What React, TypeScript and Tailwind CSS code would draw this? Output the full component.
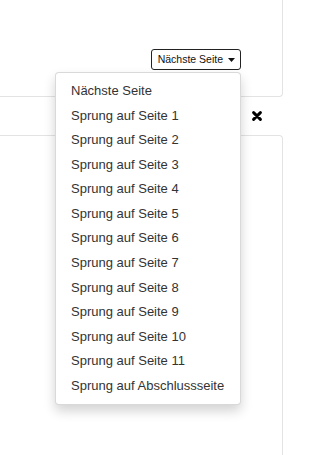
import React from "react";

const items = [
  "Nächste Seite",
  "Sprung auf Seite 1",
  "Sprung auf Seite 2",
  "Sprung auf Seite 3",
  "Sprung auf Seite 4",
  "Sprung auf Seite 5",
  "Sprung auf Seite 6",
  "Sprung auf Seite 7",
  "Sprung auf Seite 8",
  "Sprung auf Seite 9",
  "Sprung auf Seite 10",
  "Sprung auf Seite 11",
  "Sprung auf Abschlussseite",
];

export default function App() {
  return (
    <div className="w-[307px] h-[455px] overflow-hidden bg-white relative font-['Liberation_Sans',Arial,sans-serif] text-[#333]">
      <div className="-ml-[10px] w-[293px] flex flex-col">
        <div className="h-[97px] border border-t-0 border-[#e3e3e3] rounded-b-[4px] flex justify-end items-end pr-[41px] pb-[26px]">
          <div className="relative">
            <button className="h-[21px] border border-[#222] rounded-[3px] pl-[6px] pr-[5px] text-[10.5px] leading-none text-[#111] bg-white flex items-center gap-[5px]">
              <span>Nächste Seite</span>
              <svg width="7" height="4" viewBox="0 0 7 4">
                <path d="M0 0h7L3.5 4z" fill="#111" />
              </svg>
            </button>
            <div className="absolute z-10 right-0 top-[calc(100%+2px)] w-[186px] bg-white border border-[rgba(0,0,0,0.15)] rounded-[4px] py-[6px] shadow-[0_6px_12px_rgba(0,0,0,0.175)]">
              {items.map((t) => (
                <div key={t} className="px-[15px] py-[3px] text-[13px] leading-[1.42857] text-[#333] whitespace-nowrap">
                  {t}
                </div>
              ))}
            </div>
          </div>
        </div>
        <div className="h-[38px] flex items-center justify-end pr-[21px] gap-[11px]">
          <svg width="9" height="10" viewBox="0 0 9 10">
            <circle cx="4.5" cy="5" r="3" fill="none" stroke="#999" strokeWidth="1.3" />
          </svg>
          <svg width="10" height="10" viewBox="0 0 10 10">
            <path d="M1.6 1.6L8.4 8.4M8.4 1.6L1.6 8.4" stroke="#000" strokeWidth="2.9" strokeLinecap="round" />
          </svg>
        </div>
        <div className="h-[330px] border border-b-0 border-[#e3e3e3] rounded-t-[4px]"></div>
      </div>
    </div>
  );
}
